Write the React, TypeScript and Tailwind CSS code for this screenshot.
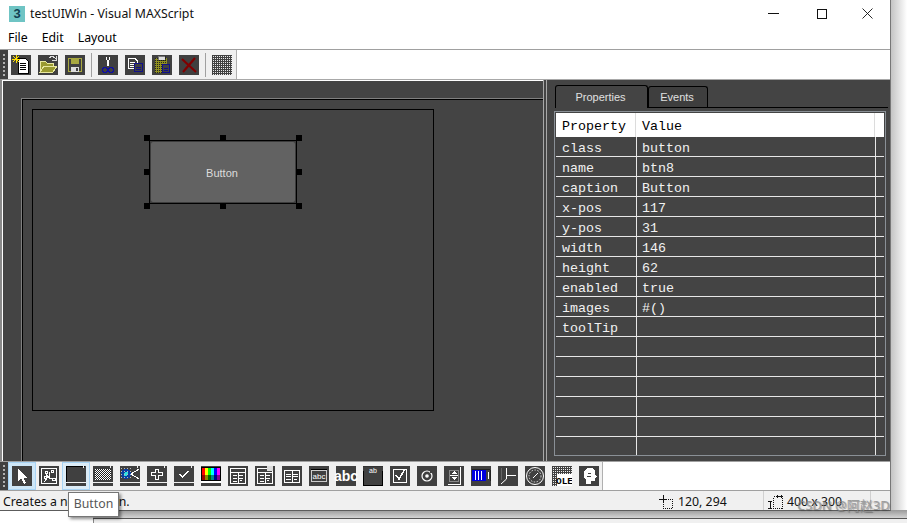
import React from "react";

const ui = "font-['Noto_Sans','Open_Sans',sans-serif]";

function Tile({ children, cls = "" }: { children?: React.ReactNode; cls?: string }) {
  return (
    <svg width="20" height="20" viewBox="0 0 20 20" shapeRendering="crispEdges" className={"shrink-0 bg-[#404040] " + cls}>
      {children}
    </svg>
  );
}

function Gripper() {
  return (
    <div className="w-[8px] h-full bg-[#404040] flex flex-col items-center justify-center gap-[2px] shrink-0">
      {[0, 1, 2, 3, 4, 5].map((i) => (
        <div key={i} className="w-[2px] h-[2px] bg-[#b0b0b0]" />
      ))}
    </div>
  );
}

const Sep = () => <div className="w-[1px] h-[24px] bg-[#a0a0a0] mx-[6px] shrink-0" />;

const dots = (c: string, step = 2, x0 = 2, y0 = 2, x1 = 18, y1 = 18) => {
  const r: React.ReactNode[] = [];
  for (let y = y0; y < y1; y += step) for (let x = x0; x < x1; x += step) r.push(<rect key={x + "-" + y} x={x} y={y} width="1" height="1" fill={c} />);
  return r;
};

const Bar = () => <path d="M0 16.5H20M17.5 0V2" stroke="#f0f0f0" fill="none" />;

const topIcons = [
  <Tile key="new">
    <path d="M7 3H14L17 6V18H7Z" fill="#fff" stroke="#000" />
    <path d="M9 8H15M9 10H15M9 12H15M9 14H15" stroke="#000" />
    <path d="M5 0V8M1 4H9M2 1L8 7M8 1L2 7" stroke="#ffe000" />
  </Tile>,
  <Tile key="open">
    <path d="M2 17V6H7L9 8H15V11H6L2 17H15L19 11H6" fill="#9a9a30" stroke="#e8e8a0" />
    <path d="M11 3C13 1 16 1 18 4M18 1V5H14" fill="none" stroke="#ddd" />
  </Tile>,
  <Tile key="save">
    <path d="M3.500 3.500H16.500V16.500H3.500Z" fill="none" stroke="#a8a840" strokeWidth="1.500" />
    <rect x="6" y="3" width="8" height="6" fill="#a8a840" />
    <rect x="6" y="12" width="8" height="5" fill="#ddd" />
    <rect x="11" y="13" width="2" height="3" fill="#404040" />
  </Tile>,
  <Tile key="cut">
    <path d="M8 2L11 11M12 2L9 11" stroke="#fff" fill="none" />
    <circle cx="7" cy="15" r="2.500" fill="none" stroke="#1010a0" strokeWidth="1.500" />
    <circle cx="13" cy="15" r="2.500" fill="none" stroke="#1010a0" strokeWidth="1.500" />
  </Tile>,
  <Tile key="copy">
    <path d="M3.500 3.500H10L12.500 6V13.500H3.500Z" fill="#404040" stroke="#fff" />
    <path d="M5 7H10M5 9H10M5 11H9" stroke="#fff" />
    <rect x="9.500" y="8.500" width="8" height="8" fill="#404040" stroke="#10108a" strokeWidth="1.500" />
    <path d="M11 12H16M11 14H16" stroke="#10108a" />
  </Tile>,
  <Tile key="paste">
    <rect x="3" y="3" width="12" height="15" fill="#8f8f20" />
    <g>{dots("#222", 2, 3, 3, 15, 18)}</g>
    <rect x="6" y="1" width="7" height="4" fill="#ddd" stroke="#111" strokeWidth="0.500" />
    <rect x="10.500" y="9.500" width="7" height="8" fill="#404040" stroke="#10108a" strokeWidth="1.500" />
    <path d="M12 13H16M12 15H16" stroke="#10108a" />
  </Tile>,
  <Tile key="del">
    <path d="M3 4L17 17M16 3L4 17" stroke="#800000" strokeWidth="2.200" shapeRendering="auto" />
  </Tile>,
  <Tile key="grid">
    <g>{dots("#e8e8e8", 2, 1, 1, 20, 20)}</g>
  </Tile>,
];

const bottomIcons = [
  <Tile key="a">
    <path d="M6 2V15L9 12L12 18L14 17L11 11.500H15Z" fill="#fff" />
  </Tile>,
  <Tile key="b">
    <rect x="2.500" y="2.500" width="15" height="15" fill="none" stroke="#fff" />
    <path d="M5 16L9 11M7 8L10 12M11 6L10 12M13 13L10 12M6 5H8V7H6ZM12 4H14V6H12ZM13 12H16V14H13ZM5 10H7V12H5Z" stroke="#fff" fill="#404040" />
  </Tile>,
  <Tile key="c">
    <path d="M0.500 16V0.500H19" fill="none" stroke="#000" />
    <Bar />
  </Tile>,
  <Tile key="d">
    <rect x="2" y="3" width="16" height="11" fill="#222" />
    <g>{dots("#fff", 2, 2, 3, 18, 14)}</g>
    <g>{dots("#fff", 2, 3, 4, 18, 14)}</g>
    <Bar />
  </Tile>,
  <Tile key="e">
    <path d="M11 8L19 3M11 8L19 13" stroke="#fff" fill="none" />
    <circle cx="6" cy="8" r="5" fill="#0a3ea0" />
    <circle cx="6" cy="8" r="2" fill="#30e0e0" />
    <g>{dots("#bbb", 3, 1, 2, 12, 14)}</g>
    <Bar />
  </Tile>,
  <Tile key="f">
    <path d="M8.500 3.500H11.500V6.500H15.500V9.500H11.500V13.500H8.500V9.500H4.500V6.500H8.500Z" fill="none" stroke="#fff" />
    <Bar />
  </Tile>,
  <Tile key="g">
    <path d="M5.500 8L8.500 11L14.500 5" fill="none" stroke="#fff" strokeWidth="2" />
    <Bar />
  </Tile>,
  <Tile key="h">
    <rect x="0" y="1" width="20" height="15" fill="#000" />
    {["#f00", "#ff0", "#0f0", "#0ff", "#00f", "#f0f"].map((c, i) => (
      <rect key={c} x={1 + i * 3} y="2" width="3" height="7" fill={c} />
    ))}
    {["#900", "#880", "#060", "#088", "#008", "#808"].map((c, i) => (
      <rect key={c} x={1 + i * 3} y="9" width="3" height="5" fill={c} />
    ))}
    <rect x="0" y="15" width="20" height="2" fill="#fff" />
  </Tile>,
  <Tile key="i">
    <rect x="2.500" y="2.500" width="15" height="15" fill="none" stroke="#fff" />
    <path d="M3 6.500H17M5 9.500H9M5 12.500H9M5 15H9M11 9.500H15M11 12.500H15M12 14.500H14M10 7V17" stroke="#fff" />
  </Tile>,
  <Tile key="j">
    <rect x="2.500" y="2.500" width="15" height="15" fill="none" stroke="#fff" />
    <path d="M3 6.500H17M5 9.500H9M5 12.500H9M5 15H9M11 9.500H15M11 12.500H15M12 14.500H14M10 7V17" stroke="#fff" />
    <rect x="12" y="0" width="6" height="5" fill="#ddd" />
  </Tile>,
  <Tile key="k">
    <rect x="2.500" y="4.500" width="15" height="12" fill="none" stroke="#fff" />
    <path d="M4 8H9M4 10.500H9M4 13H9M11 8H16M11 10.500H16M12 13H15M10 5V16" stroke="#fff" />
  </Tile>,
  <Tile key="l">
    <rect x="2.500" y="4.500" width="15" height="11" fill="none" stroke="#ccc" />
    <path d="M2 3H18" stroke="#000" />
    <text x="10" y="13" textAnchor="middle" fontSize="8" fill="#fff" fontFamily="Liberation Sans, sans-serif" shapeRendering="auto">abc</text>
  </Tile>,
  <Tile key="m" cls="overflow-visible">
    <text x="10" y="15" textAnchor="middle" fontSize="14" fontWeight="700" fill="#fff" fontFamily="Liberation Sans, sans-serif" shapeRendering="auto">abc</text>
  </Tile>,
  <Tile key="n">
    <path d="M0.500 5V19.500H19.500V5" fill="none" stroke="#000" />
    <rect x="0" y="0" width="20" height="1" fill="#333" />
    <text x="10" y="7" textAnchor="middle" fontSize="7" fill="#fff" fontFamily="Liberation Sans, sans-serif" shapeRendering="auto">ab</text>
  </Tile>,
  <Tile key="o">
    <rect x="3.500" y="3.500" width="13" height="13" fill="#404040" stroke="#fff" />
    <path d="M6 9L9 13L15 3" fill="none" stroke="#fff" strokeWidth="1.500" />
  </Tile>,
  <Tile key="p">
    <circle cx="10" cy="10" r="5" fill="none" stroke="#fff" strokeWidth="1.200" shapeRendering="auto" />
    <circle cx="10" cy="10" r="1.800" fill="#fff" shapeRendering="auto" />
    <rect x="13" y="3" width="4" height="4" fill="#404040" />
    <rect x="14" y="14" width="3" height="3" fill="#404040" />
  </Tile>,
  <Tile key="q">
    <path d="M5.500 4.500H14.500V15.500H5.500Z" fill="none" stroke="#888" />
    <path d="M16.500 1V18.500H4" fill="none" stroke="#fff" />
    <path d="M10 5L13 8H7Z M10 14L13 11H7Z" fill="#fff" />
    <path d="M6 9.500H14" stroke="#fff" />
  </Tile>,
  <Tile key="r">
    <rect x="1" y="4" width="14" height="11" fill="#0000e0" />
    <path d="M4.500 5V14M7.500 5V14M10.500 5V14" stroke="#fff" />
    <path d="M1 3.500H19M19 3.500V15" stroke="#222" />
    <path d="M17 6V13" stroke="#fff" />
  </Tile>,
  <Tile key="s">
    <path d="M8.500 2V13L3 18" stroke="#fff" fill="none" shapeRendering="auto" />
    <path d="M9 9.500H18" stroke="#fff" />
    <path d="M3.500 2V14" stroke="#666" />
  </Tile>,
  <Tile key="t">
    <circle cx="10" cy="10" r="8.500" fill="none" stroke="#fff" shapeRendering="auto" />
    <circle cx="10" cy="10" r="6" fill="none" stroke="#ddd" strokeDasharray="1.500 1.500" shapeRendering="auto" />
    <path d="M8 12L13 7" stroke="#fff" shapeRendering="auto" />
  </Tile>,
  <Tile key="u" cls="bg-[#404040]">
    <g>{dots("#eee", 2, 1, 1, 20, 20)}</g>
    <rect x="5" y="8" width="15" height="12" fill="#fff" />
    <text x="12.500" y="18" textAnchor="middle" fontSize="9.500" fontWeight="700" fill="#000" fontFamily="Liberation Mono, monospace" shapeRendering="auto">OLE</text>
  </Tile>,
  <Tile key="v">
    <path d="M5 9C4 4 8 2 11 2C15 2 17 5 16 8L18 11L16 12V15H12V18H7V14C5 13 5 11 5 9Z" fill="#fff" />
    <path d="M9 7H12M8 10H12" stroke="#404040" />
  </Tile>,
];

const rows: [string, string][] = [
  ["class", "button"],
  ["name", "btn8"],
  ["caption", "Button"],
  ["x-pos", "117"],
  ["y-pos", "31"],
  ["width", "146"],
  ["height", "62"],
  ["enabled", "true"],
  ["images", "#()"],
  ["toolTip", ""],
  ["", ""],
  ["", ""],
  ["", ""],
  ["", ""],
  ["", ""],
  ["", ""],
];

const mono = "font-['Liberation_Mono',monospace] text-[13.33px] leading-none";

function Handle({ cls }: { cls: string }) {
  return <div className={"absolute w-[6px] h-[6px] bg-black " + cls} />;
}

export default function App() {
  return (
    <div className={"relative w-[907px] h-[523px] overflow-hidden bg-white text-black " + ui}>
      {/* window shadow */}
      <div className="absolute left-[891px] top-0 w-[16px] h-[510px] bg-gradient-to-r from-[#c4c4c4] to-[#ffffff]" />
      {/* window behind */}
      <div className="absolute left-[93px] top-[510px] w-[814px] h-[13px] flex flex-col">
        <div className="h-[8px] bg-gradient-to-b from-[#9a9a9a] to-[#d4d4d4]" />
        <div className="h-[1px] bg-[#555]" />
        <div className="flex-1 bg-[#f0f0f0] border-l border-[#888]" />
      </div>

      <div className="relative w-[891px] h-[511px] flex flex-col bg-white border-b border-[#5c5c5c] border-r-[1px] border-r-[#777]">
        {/* title */}
        <div className="h-[27px] flex items-center shrink-0 pl-[9px]">
          <div className="w-[16px] h-[16px] bg-[#6fc4c4] flex items-center justify-center text-[#123f52] text-[13px] font-bold leading-none font-['Liberation_Sans',sans-serif]">3</div>
          <div className="ml-[5px] pt-[1px] text-[12.300px] leading-none text-[#111]">testUIWin - Visual MAXScript</div>
          <div className="ml-auto flex items-center">
            <svg width="11" height="11" viewBox="0 0 11 11" className="mr-[37px]" shapeRendering="crispEdges"><path d="M0 5.500H11" stroke="#111" /></svg>
            <svg width="11" height="11" viewBox="0 0 11 11" className="mr-[35px]" shapeRendering="crispEdges"><rect x="1.500" y="1.500" width="9" height="9" fill="none" stroke="#111" /></svg>
            <svg width="11" height="11" viewBox="0 0 11 11" className="mr-[17px]"><path d="M0.500 0.500L10.500 10.500M10.500 0.500L0.500 10.500" stroke="#111" strokeWidth="0.900" /></svg>
          </div>
        </div>
        {/* menu */}
        <div className="h-[22px] flex items-center shrink-0 pl-[8px] gap-[14px] text-[12.300px] leading-none">
          <span>File</span>
          <span>Edit</span>
          <span>Layout</span>
        </div>
        {/* top toolbar */}
        <div className="h-[30px] shrink-0 flex border-t border-[#a0a0a0]">
          <div className="h-[29px] flex items-center bg-[#f0f0f0] w-[237px] border-r border-[#b0b0b0]">
            <Gripper />
            <div className="flex items-center pl-[3px]">
              <div className="flex gap-[7px]">{topIcons.slice(0, 3)}</div>
              <Sep />
              <div className="flex gap-[7px]">{topIcons.slice(3, 7)}</div>
              <Sep />
              {topIcons[7]}
            </div>
          </div>
        </div>
        {/* main */}
        <div className="h-[382px] shrink-0 flex bg-[#444444] border-l-2 border-[#8a8a8a] border-t border-t-[#a8a8a8]">
          <div className="w-[541px] shrink-0 border-l border-t border-white pl-[18px] pt-[17px] overflow-hidden">
            <div className="h-full border-l border-t border-[#808080]">
              <div className="h-full border-l border-t border-black pl-[9px] pt-[9px]">
                <div className="relative w-[402px] h-[302px] border border-black">
                  <div className="absolute left-[116px] top-[30px] w-[148px] h-[64px] border border-black bg-[#3c3c3c] p-[1px]">
                    <div className="w-full h-full rounded-[2px] bg-[#626262] flex items-center justify-center pt-[2px] pr-[2px] text-[11px] text-[#dcdcdc] leading-none font-['Liberation_Sans',sans-serif]">Button</div>
                  </div>
                  <Handle cls="left-[111px] top-[25px]" />
                  <Handle cls="left-[187px] top-[25px]" />
                  <Handle cls="left-[263px] top-[25px]" />
                  <Handle cls="left-[111px] top-[59px]" />
                  <Handle cls="left-[263px] top-[59px]" />
                  <Handle cls="left-[111px] top-[93px]" />
                  <Handle cls="left-[187px] top-[93px]" />
                  <Handle cls="left-[263px] top-[93px]" />
                </div>
              </div>
            </div>
          </div>
          {/* splitter */}
          <div className="w-[4px] shrink-0 border-x border-[#a8a8a8]" />
          <div className="flex-1 min-w-0 pl-[8px] pr-[2px] pt-[5px] flex flex-col">
            {/* tabs */}
            <div className="h-[23px] shrink-0 flex items-end border-b border-black text-[11px] text-[#e0e0e0] leading-none font-['Liberation_Sans',sans-serif]">
              <div className="w-[93px] h-[23px] -mb-[1px] bg-[#444] border border-b-0 border-black rounded-t-[3px] flex items-center justify-center pr-[2px]">Properties</div>
              <div className="w-[60px] h-[21px] bg-[#3e3e3e] border border-b-0 border-black rounded-t-[3px] flex items-center justify-center pr-[2px]">Events</div>
            </div>
            {/* table */}
            <div className="mt-[3px] -ml-[1px] w-[332px] h-[345px] border border-[#8a9096] p-[1px] overflow-hidden">
              <div className={"h-[24px] bg-white flex items-center text-black " + mono}>
                <div className="w-[80px] h-full flex items-center pl-[6px] pt-[4px] border-r border-[#dcdcdc]">Property</div>
                <div className="w-[239px] h-full flex items-center pl-[6px] pt-[4px] border-r border-[#dcdcdc]">Value</div>
              </div>
              {rows.map(([k, v], i) => (
                <div key={i} className={"h-[20px] flex border-b border-[#e8e8e8] text-[#f2f2f2] " + mono}>
                  <div className="w-[81px] flex items-center pl-[6px] pt-[5px] border-r border-[#e8e8e8]">{k}</div>
                  <div className="w-[239px] flex items-center pl-[5px] pt-[5px] border-r border-[#e8e8e8]">{v}</div>
                </div>
              ))}
            </div>
          </div>
        </div>
        {/* bottom toolbar */}
        <div className="h-[29px] shrink-0 flex border-t border-[#a0a0a0]">
          <div className="w-[603px] h-[28px] flex items-center bg-[#f0f0f0] border-r border-[#b0b0b0]">
            <Gripper />
            <div className="flex items-center gap-[7px] pl-[4px]">
              {bottomIcons.map((ic, i) => (
                <div key={i} className="relative w-[20px] h-[20px]">
                  {(i === 0 || i === 2) && <div className={"absolute -inset-[4px] border border-[#a8d4f5] " + (i === 0 ? "bg-[#cde6f7]" : "bg-[#dcecf7]")} />}
                  <div className="relative">{ic}</div>
                </div>
              ))}
            </div>
          </div>
        </div>
        {/* status */}
        <div className="flex-1 min-h-0 bg-[#f0f0f0] border-t border-[#a0a0a0] flex items-center text-[12.300px] leading-none text-[#111]">
          <div className="w-[659px] pl-[3px] pt-[3px] shrink-0">Creates a new button.</div>
          <div className="w-[104px] shrink-0 flex items-center gap-[5px] h-full pt-[3px]">
            <svg width="14" height="14" viewBox="0 0 14 14" shapeRendering="crispEdges"><path d="M4.500 0V7M0 4.500H7" stroke="#111" /><path d="M5 4.500H13.500V13.500H4.500V5" fill="none" stroke="#111" strokeDasharray="1 1" /></svg>
            <span>120, 294</span>
          </div>
          <div className="w-[107px] shrink-0 flex items-center gap-[4px] h-full border-l border-[#d0d0d0] pl-[4px] pt-[3px]">
            <svg width="15" height="15" viewBox="0 0 15 15" shapeRendering="crispEdges"><path d="M5.500 1.500H14.500V13.500H5.500Z" fill="none" stroke="#111" strokeDasharray="1 1" /><path d="M9 0V3M13 0V3M9 1.500H13M2.500 6V14M0 6.500H4M0 13.500H4" stroke="#111" /></svg>
            <span>400 x 300</span>
          </div>
          <div className="flex-1 h-full border-l border-[#d0d0d0]" />
        </div>
      </div>

      {/* tooltip */}
      <div className="absolute left-[68px] top-[492px] w-[51px] h-[25px] bg-white border border-[#767676] shadow-[2px_2px_3px_rgba(0,0,0,0.45)] flex items-center justify-center text-[12.300px] leading-none text-[#575757]">Button</div>
      {/* watermark */}
      <div className="absolute left-[797px] top-[499px] text-[13px] leading-none text-[#8a8a8a] opacity-80 whitespace-nowrap font-['Noto_Sans','Noto_Sans_CJK_SC',sans-serif] [text-shadow:1px_1px_1px_rgba(60,60,60,0.6)]">CSDN @阿赵3D</div>
    </div>
  );
}
